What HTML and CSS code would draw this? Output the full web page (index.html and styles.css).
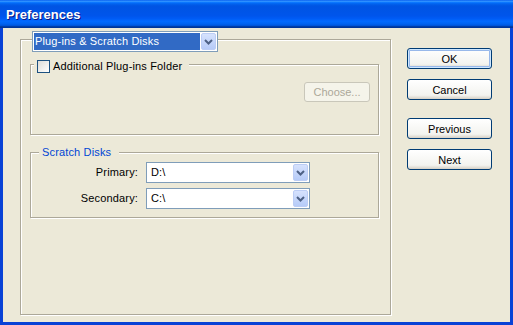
FILE: index.html
```html
<!DOCTYPE html>
<html lang="en">

<head>
    <meta charset="utf-8" />
    <title>Preferences</title>
    <link rel="stylesheet" href="styles.css">
</head>

<body>

    <div class="window">
        <div class="titlebar">Preferences</div>

        <div class="dialog">
            <div class="group panel">
                <div class="combo section-select">
                    <span class="combo-value selected">Plug-ins &amp; Scratch Disks</span>
                    <span class="combo-arrow">
                        <svg width="9" height="6" viewBox="0 0 9 6"><path d="M1 1l3.5 3.5L8 1" fill="none" stroke="#4d6185" stroke-width="2" /></svg>
                    </span>
                </div>

                <div class="group plugins">
                    <label class="group-head check-head">
                        <span class="checkbox"></span>
                        Additional Plug-ins Folder
                    </label>
                    <button type="button" class="btn choose" disabled>Choose...</button>
                </div>

                <div class="group scratch">
                    <div class="group-head legend">Scratch Disks</div>
                    <div class="disk-rows">
                        <label class="disk-label">Primary:</label>
                        <div class="combo">
                            <span class="combo-value">D:\</span>
                            <span class="combo-arrow">
                                <svg width="9" height="6" viewBox="0 0 9 6"><path d="M1 1l3.5 3.5L8 1" fill="none" stroke="#4d6185" stroke-width="2" /></svg>
                            </span>
                        </div>

                        <label class="disk-label">Secondary:</label>
                        <div class="combo">
                            <span class="combo-value">C:\</span>
                            <span class="combo-arrow">
                                <svg width="9" height="6" viewBox="0 0 9 6"><path d="M1 1l3.5 3.5L8 1" fill="none" stroke="#4d6185" stroke-width="2" /></svg>
                            </span>
                        </div>
                    </div>
                </div>
            </div>

            <div class="actions">
                <button type="button" class="btn default">OK</button>
                <button type="button" class="btn">Cancel</button>
                <button type="button" class="btn spaced">Previous</button>
                <button type="button" class="btn">Next</button>
            </div>
        </div>
    </div>

</body>

</html>
```

FILE: styles.css
```css
* {
    box-sizing: border-box;
}

body {
    margin: 0;
    font-family: "Liberation Sans", Arial, sans-serif;
    font-size: 11px;
    letter-spacing: 0.15px;
    color: #000;
}

.window {
    width: 513px;
    height: 325px;
    display: flex;
    flex-direction: column;
}

.titlebar {
    height: 28px;
    padding: 1px 0 0 6px;
    display: flex;
    align-items: center;
    font-size: 13px;
    font-weight: bold;
    letter-spacing: 0;
    color: #fff;
    text-shadow: 1px 1px 0 #0a1883;
    background: linear-gradient(to bottom, #0058ee 0%, #3593ff 4%, #288eff 6%, #127dff 8%, #036ffc 10%, #0262ee 14%, #0057e5 20%, #0054e3 24%, #0055eb 56%, #005bf5 66%, #026afe 76%, #0062ef 86%, #0052d6 92%, #0040ab 94%, #003092 100%);
}

.dialog {
    flex: 1;
    display: flex;
    align-items: flex-start;
    padding: 11px 0 0 17px;
    background: #ece9d8;
    border: 3px solid #0842d6;
    border-top: 0;
}

.group {
    border: 1px solid #aca899;
    box-shadow: 1px 1px 0 #fff, inset 1px 1px 0 #fff;
}

.group-head {
    background: #ece9d8;
    width: fit-content;
    height: 13px;
    line-height: 13px;
}

.panel {
    width: 371px;
    height: 276px;
    padding: 0 11px 0 9px;
}

/* combo boxes */
.combo {
    display: flex;
    height: 21px;
    padding: 1px;
    background: #fff;
    border: 1px solid #7f9db9;
}

.combo-value {
    flex: 1;
    padding-left: 3px;
    line-height: 17px;
    white-space: nowrap;
}

.combo-value.selected {
    margin-right: 1px;
    padding-left: 1px;
    background: #316ac5;
    color: #fff;
}

.combo-arrow {
    width: 15px;
    display: flex;
    align-items: center;
    justify-content: center;
    border: 1px solid #bccdf5;
    border-radius: 2px;
    background: linear-gradient(#d6e2fd, #b6cbf8);
}

.section-select {
    width: 186px;
    margin: -9px 0 0 2px;
}

/* plug-ins group */
.plugins {
    height: 71px;
    margin-top: 12px;
    display: flex;
    flex-direction: column;
}

.check-head {
    margin: -5px 0 0 3px;
    padding: 0 7px 0 3px;
    display: flex;
    align-items: center;
    gap: 3px;
}

.checkbox {
    width: 13px;
    height: 13px;
    border: 1px solid #1c5180;
    background: linear-gradient(135deg, #dcdcd7, #fff);
}

/* scratch disks group */
.scratch {
    margin-top: 17px;
    padding-bottom: 8px;
}

.legend {
    margin: -7px 0 0 8px;
    padding: 0 8px 0 3px;
    color: #0046d5;
}

.disk-rows {
    margin-top: 3px;
    display: grid;
    grid-template-columns: 107px 164px;
    grid-auto-rows: 21px;
    column-gap: 8px;
    row-gap: 5px;
}

.disk-label {
    text-align: right;
    line-height: 21px;
}

/* buttons */
.btn {
    width: 85px;
    height: 21px;
    padding: 0;
    font: inherit;
    color: #000;
    border: 1px solid #003c74;
    border-radius: 3px;
    background: linear-gradient(#fff, #f3f3ef 80%, #d6d0c5);
}

.btn.default {
    box-shadow: inset 0 0 0 1px #cee7ff, inset 0 0 0 2px #98b8ea;
}

.btn:disabled {
    color: #aca899;
    border-color: #c9c7ba;
    background: #f5f4ea;
}

.btn.choose {
    margin: 9px 8px 0 auto;
    width: 66px;
    height: 20px;
}

.actions {
    margin: 9px 0 0 16px;
    display: flex;
    flex-direction: column;
    gap: 10px;
}

.actions .spaced {
    margin-top: 8px;
}
```
